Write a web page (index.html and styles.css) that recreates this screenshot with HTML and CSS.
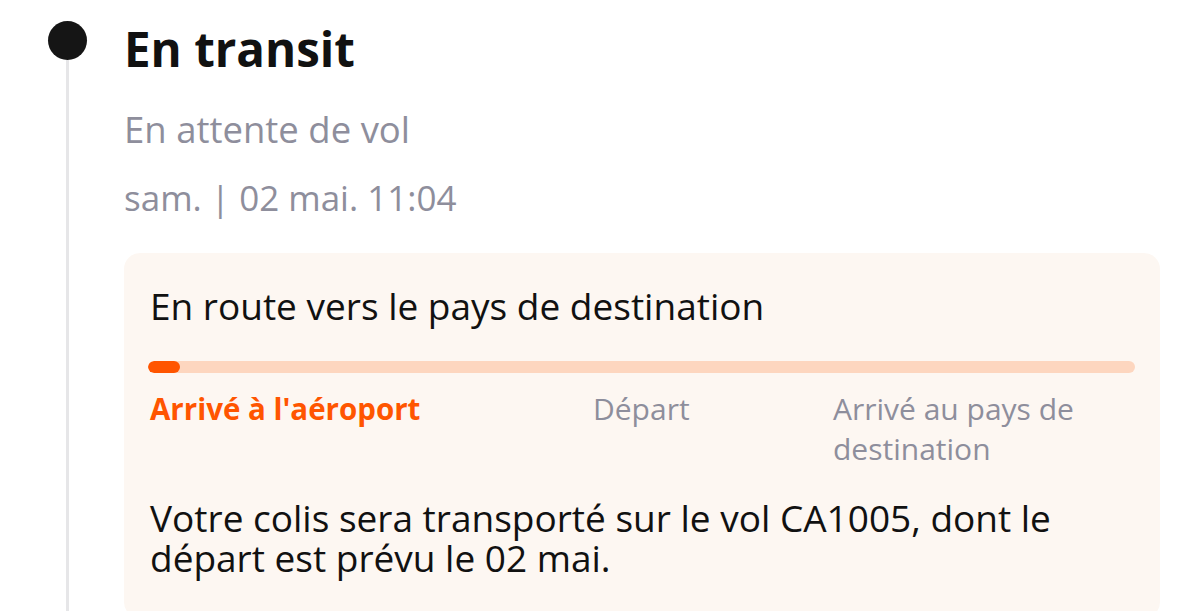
FILE: index.html
```html
<!DOCTYPE html>
<html lang="fr">
<head>
    <meta charset="UTF-8">
    <meta name="viewport" content="width=device-width, initial-scale=1.0">
    <title>Suivi du colis</title>
    <link rel="stylesheet" href="styles.css">
</head>
<body>
    <div class="timeline">
        <div class="rail">
            <span class="dot"></span>
            <span class="line"></span>
        </div>
        <div class="step">
            <h1 class="step-title">En transit</h1>
            <p class="step-status">En attente de vol</p>
            <p class="step-date">sam. | 02 mai. 11:04</p>

            <div class="card">
                <p class="card-title">En route vers le pays de destination</p>
                <div class="progress">
                    <div class="progress-fill" style="width: 32px;"></div>
                </div>
                <div class="stages">
                    <span class="stage active">Arrivé à l'aéroport</span>
                    <span class="stage">Départ</span>
                    <span class="stage">Arrivé au pays de destination</span>
                </div>
                <p class="card-text">Votre colis sera transporté sur le vol CA1005, dont le départ est prévu le 02 mai.</p>
            </div>
        </div>
    </div>
</body>
</html>
```

FILE: styles.css
```css
body {
    font-family: "Open Sans", "Noto Sans", sans-serif;
    margin: 0;
    padding: 0;
    background-color: #ffffff;
    color: #111111;
    overflow: hidden;
}
.timeline {
    display: flex;
    height: 611px;
}
.rail {
    width: 124px;
    display: flex;
    flex-direction: column;
    align-items: center;
    padding: 21px 0 0 10px;
    box-sizing: border-box;
    flex-shrink: 0;
}
.dot {
    width: 39px;
    height: 39px;
    border-radius: 50%;
    background-color: #151515;
    flex-shrink: 0;
}
.line {
    width: 3px;
    flex: 1;
    background-color: #e6e6e8;
}
.step {
    flex: 1;
    padding-right: 40px;
}
.step-title {
    font-size: 47.5px;
    font-weight: 700;
    margin: 21px 0 0 0;
    line-height: 56px;
}
.step-status, .step-date {
    font-size: 35px;
    color: #8e8e9c;
    margin: 0;
    line-height: 40px;
}
.step-status {
    font-size: 36.5px;
    margin-top: 32px;
}
.step-date {
    margin-top: 29px;
}
.card {
    background-color: #fdf7f2;
    border-radius: 16px;
    margin-top: 35px;
    padding: 31px 25px 40px 26px;
}
.card-title {
    font-size: 37px;
    margin: 0;
    line-height: 44px;
}
.progress {
    margin-top: 33px;
    margin-left: -2px;
    height: 12px;
    border-radius: 6px;
    background-color: #fdd6bf;
    overflow: hidden;
}
.progress-fill {
    height: 100%;
    border-radius: 6px;
    background-color: #ff5500;
}
.stages {
    display: grid;
    grid-template-columns: 443px 240px 1fr;
    margin-top: 16px;
}
.stage {
    font-size: 30px;
    line-height: 40px;
    color: #8e8e9c;
}
.stage.active {
    color: #ff5500;
    font-weight: 700;
    font-size: 29.5px;
}
.card-text {
    font-size: 37px;
    line-height: 40px;
    margin: 29px 0 0 0;
}
```
